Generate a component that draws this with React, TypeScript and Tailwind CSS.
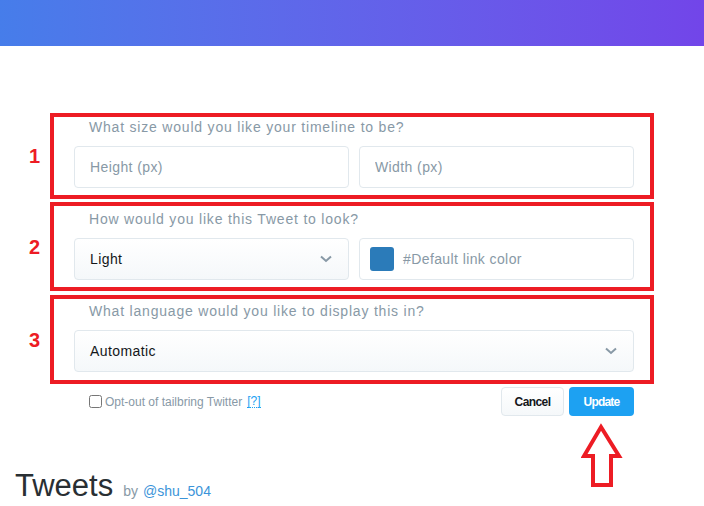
import { ChangeEvent, useState } from 'react';

const label = "block h-[20px] pl-[15px] text-[14px] leading-[20px] text-[#8899a6] tracking-[0.8px]";
const field = "flex h-[42px] items-center rounded-[4px] border border-[#e1e8ed] px-[16px] text-[14px] tracking-[0.4px]";

function Chevron() {
  return (
    <svg width="12" height="8" viewBox="0 0 12 8" className="ml-auto">
      <path d="M1 1.5 L6 6 L11 1.5" fill="none" stroke="#8899a6" strokeWidth="2" />
    </svg>
  );
}

function Section({ num, children, className }: { num: string; children: React.ReactNode; className?: string }) {
  return (
    <div className={`flex items-center ${className ?? ''}`}>
      <span className="w-[50px] pl-[29px] text-[20px] font-bold text-[#ed1c24]">{num}</span>
      <div className="w-[604px] border-4 border-[#ed1c24] pl-[20px] pr-[16px]">{children}</div>
    </div>
  );
}

export default function App() {
  const [height, setHeight] = useState('');
  const [width, setWidth] = useState('');
  const [optOut, setOptOut] = useState(false);

  return (
    <div className="relative min-h-[506px] w-[704px] bg-white font-['Liberation_Sans',Arial,sans-serif]">
      <div className="h-[46px] bg-gradient-to-r from-[#467dea] to-[#7245e9]" />

      <div className="mt-[67px] flex flex-col">
        <Section num="1">
          <div className="pt-0 pb-[7px]">
            <span className={label}>What size would you like your timeline to be?</span>
            <div className="mt-[9px] flex gap-[10px]">
              <input
                value={height}
                onChange={(e: ChangeEvent<HTMLInputElement>) => setHeight(e.target.value)}
                placeholder="Height (px)"
                className={`${field} w-[275px] bg-white pl-[15px] text-[#14171a] outline-none placeholder:text-[#8899a6]`}
              />
              <input
                value={width}
                onChange={(e: ChangeEvent<HTMLInputElement>) => setWidth(e.target.value)}
                placeholder="Width (px)"
                className={`${field} w-[275px] bg-white pl-[15px] text-[#14171a] outline-none placeholder:text-[#8899a6]`}
              />
            </div>
          </div>
        </Section>

        <Section num="2" className="mt-[3px]">
          <div className="pb-[7px]">
            <span className={`${label} mt-[3px]`}>How would you like this Tweet to look?</span>
            <div className="mt-[9px] flex gap-[10px]">
              <div className={`${field} w-[275px] bg-gradient-to-b from-white to-[#f5f8fa] pl-[15px] text-[#14171a]`}>
                Light
                <Chevron />
              </div>
              <div className={`${field} w-[275px] bg-white pl-[10px] text-[#8899a6]`}>
                <span className="mr-[9px] h-[24px] w-[24px] rounded-[3px] bg-[#2b7bb9]" />
                #Default link color
              </div>
            </div>
          </div>
        </Section>

        <Section num="3" className="mt-[4px]">
          <div className="pb-[8px]">
            <span className={`${label} mt-[2px]`}>What language would you like to display this in?</span>
            <div className={`${field} mt-[9px] w-[560px] bg-gradient-to-b from-white to-[#f5f8fa] pl-[15px] text-[#14171a]`}>
              Automatic
              <Chevron />
            </div>
          </div>
        </Section>

        <div className="mt-[3px] flex items-center pl-[89px] pr-[70px]">
          <label className="flex items-center gap-[3px] text-[12px] text-[#8899a6]">
            <input
              type="checkbox"
              checked={optOut}
              onChange={() => setOptOut(!optOut)}
              className="m-0 h-[13px] w-[13px]"
            />
            Opt-out of tailbring Twitter
            <span className="ml-[2px] border-b border-dotted border-[#1da1f2] leading-[12px] text-[#1da1f2]">[?]</span>
          </label>
          <div className="ml-auto flex gap-[5px]">
            <button className="h-[29px] w-[63px] rounded-[4px] border border-[#e1e8ed] bg-gradient-to-b from-white to-[#f5f8fa] text-[12px] font-bold tracking-[-0.6px] text-[#14171a]">
              Cancel
            </button>
            <button className="h-[29px] w-[65px] rounded-[4px] bg-[#1da1f2] text-[12px] font-bold tracking-[-0.8px] text-white">
              Update
            </button>
          </div>
        </div>

        <div className="mt-[54px] flex items-baseline pl-[15px]">
          <h2 className="text-[31px] leading-[31px] text-[#292f33]">Tweets</h2>
          <span className="ml-[10px] text-[14px] text-[#8899a6]">by</span>
          <span className="ml-[5px] text-[14px] text-[#3b94d9]">@shu_504</span>
        </div>
      </div>

      <svg className="absolute left-[581px] top-[423px]" width="42" height="66" viewBox="0 0 42 66">
        <polygon
          points="20,4 38,33 30,33 30,62 12,62 12,33 3,33"
          fill="white"
          stroke="#ed1c24"
          strokeWidth="4"
          strokeLinejoin="miter"
        />
      </svg>
    </div>
  );
}
